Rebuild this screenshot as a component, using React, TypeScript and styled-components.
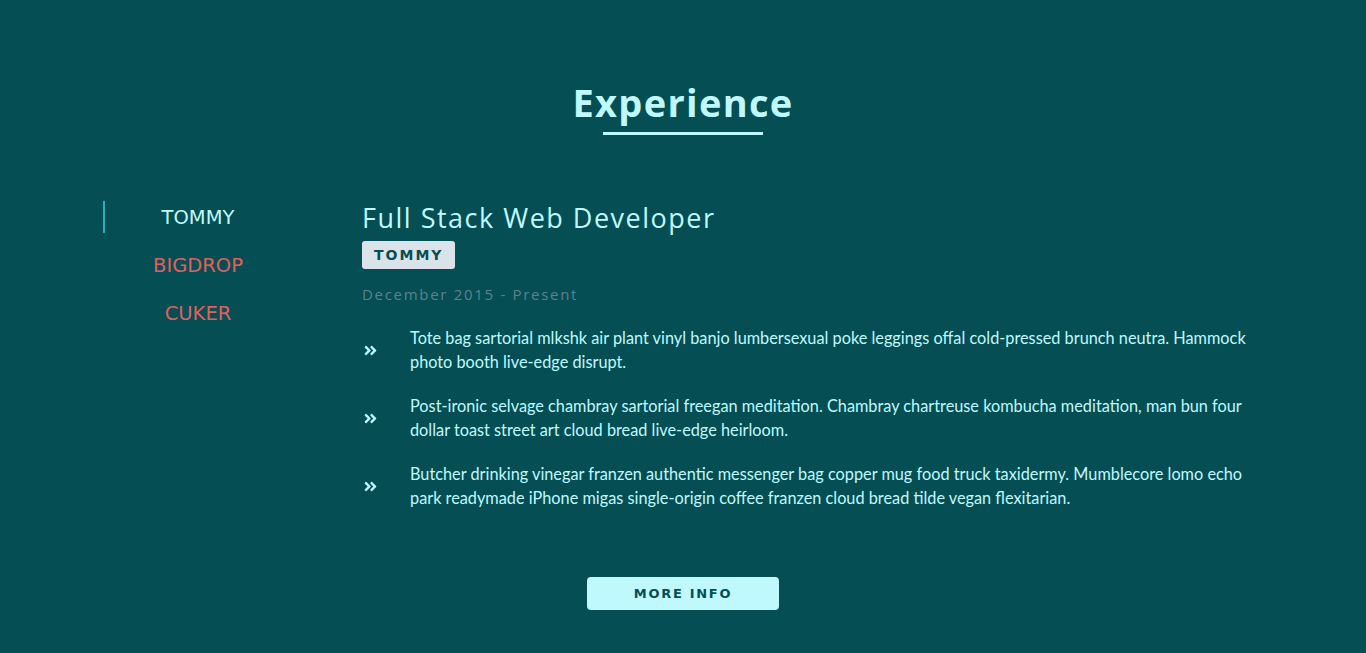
import { createGlobalStyle } from 'styled-components';
import styled from 'styled-components';
import { FaAngleDoubleRight } from 'react-icons/fa';

const bg = '#044e54';
const light = '#c0f9fd';
const red = '#e0605e';

const GlobalStyle = createGlobalStyle`
	* { box-sizing: border-box; }
	body {
		margin: 0;
		background: ${bg};
		font-family: Lato, 'Open Sans', sans-serif;
	}
`;

const Section = styled.section`
	width: 1160px;
	margin: 0 auto;
	padding: 78px 0 44px;
	display: flex;
	flex-direction: column;
	align-items: center;
`;

const Title = styled.h2`
	margin: 0;
	font-family: 'Open Sans', sans-serif;
	font-size: 38px;
	font-weight: 700;
	line-height: 48px;
	color: ${light};
	letter-spacing: 1.3px;
`;

const Underline = styled.div`
	width: 160px;
	height: 3px;
	margin-top: 6px;
	background: ${light};
`;

const Body = styled.div`
	width: 100%;
	margin-top: 66px;
	display: grid;
	grid-template-columns: 188px 1fr;
	column-gap: 71px;
`;

const Tabs = styled.div`
	display: flex;
	flex-direction: column;
	gap: 16px;
`;

const Tab = styled.button<{ $active?: boolean }>`
	border: 0;
	background: transparent;
	height: 32px;
	padding: 0;
	font-family: 'DejaVu Sans', Verdana, sans-serif;
	font-size: 19.5px;
	color: ${(p) => (p.$active ? light : red)};
	border-left: 2px solid ${(p) => (p.$active ? '#2cb1bc' : 'transparent')};
	cursor: pointer;
`;

const Job = styled.article`
	display: flex;
	flex-direction: column;
	align-items: flex-start;
`;

const JobTitle = styled.h3`
	margin: 0;
	font-family: 'Open Sans', sans-serif;
	font-weight: 400;
	font-size: 27px;
	line-height: 34px;
	letter-spacing: 1.5px;
	color: ${light};
`;

const Company = styled.span`
	margin-top: 6px;
	height: 28px;
	padding: 0 12px;
	display: inline-flex;
	align-items: center;
	background: #dbe3ea;
	border-radius: 3px;
	font-family: 'DejaVu Sans', Verdana, sans-serif;
	font-size: 14px;
	font-weight: 700;
	letter-spacing: 2px;
	color: ${bg};
`;

const Dates = styled.p`
	margin: 15px 0 0;
	font-family: 'Open Sans', sans-serif;
	font-size: 15px;
	letter-spacing: 1.7px;
	color: #5e828c;
`;

const Duties = styled.ul`
	list-style: none;
	margin: 22px 0 0;
	padding: 0;
	display: flex;
	flex-direction: column;
	gap: 20px;
`;

const Duty = styled.li`
	display: grid;
	grid-template-columns: 48px 852px;
	align-items: center;
	font-size: 16.3px;
	line-height: 24px;
	color: ${light};
	svg {
		font-size: 15px;
		margin-left: 1px;
	}
`;

const MoreButton = styled.button`
	margin-top: 67px;
	width: 192px;
	height: 33px;
	border: 0;
	border-radius: 4px;
	background: ${light};
	font-family: 'DejaVu Sans', Verdana, sans-serif;
	font-size: 13px;
	font-weight: 700;
	letter-spacing: 1.7px;
	color: ${bg};
	cursor: pointer;
`;

const duties = [
	'Tote bag sartorial mlkshk air plant vinyl banjo lumbersexual poke leggings offal cold-pressed brunch neutra. Hammock photo booth live-edge disrupt.',
	'Post-ironic selvage chambray sartorial freegan meditation. Chambray chartreuse kombucha meditation, man bun four dollar toast street art cloud bread live-edge heirloom.',
	'Butcher drinking vinegar franzen authentic messenger bag copper mug food truck taxidermy. Mumblecore lomo echo park readymade iPhone migas single-origin coffee franzen cloud bread tilde vegan flexitarian.',
];

export default function App() {
	return (
		<>
			<GlobalStyle />
			<Section>
				<Title>Experience</Title>
				<Underline />
				<Body>
					<Tabs>
						<Tab $active>TOMMY</Tab>
						<Tab>BIGDROP</Tab>
						<Tab>CUKER</Tab>
					</Tabs>
					<Job>
						<JobTitle>Full Stack Web Developer</JobTitle>
						<Company>TOMMY</Company>
						<Dates>December 2015 - Present</Dates>
						<Duties>
							{duties.map((d) => (
								<Duty key={d}>
									<FaAngleDoubleRight />
									<span>{d}</span>
								</Duty>
							))}
						</Duties>
					</Job>
				</Body>
				<MoreButton>MORE INFO</MoreButton>
			</Section>
		</>
	);
}
